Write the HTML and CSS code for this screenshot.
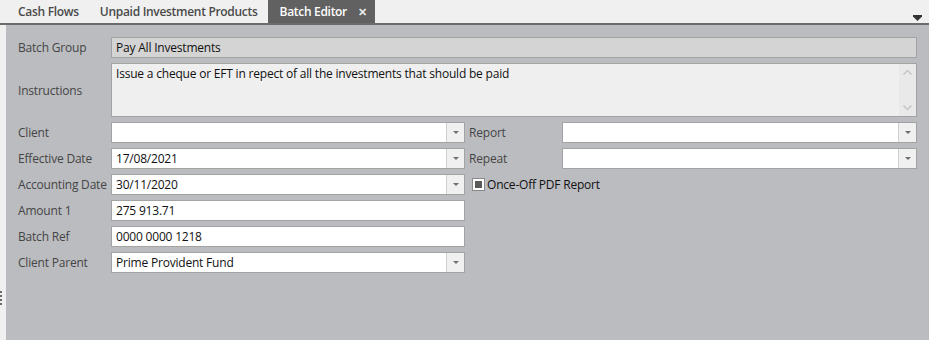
FILE: index.html
```html
<!DOCTYPE html>
<html lang="en">
<head>
  <meta charset="UTF-8">
  <title>Batch Editor</title>
  <link rel="stylesheet" href="styles.css">
</head>
<body>

  <!-- Tab strip -->
  <div class="tabs">
    <div class="tab">Cash Flows</div>
    <div class="tab">Unpaid Investment Products</div>
    <div class="tab active">Batch Editor <span class="close">&#x2715;</span></div>
    <div class="tab-menu">
      <svg width="9" height="6" viewBox="0 0 9 6"><path d="M0 0h9v1.5l-4.5 4.5-4.5-4.5z" fill="#333"/></svg>
    </div>
  </div>

  <div class="main">
    <div class="side">
      <div class="grip"></div>
    </div>

    <div class="panel">
      <div class="form">
        <label>Batch Group</label>
        <div class="field readonly wide">Pay All Investments</div>

        <label>Instructions</label>
        <div class="field memo wide">
          <span class="memo-text">Issue a cheque or EFT in repect of all the investments that should be paid</span>
          <div class="scroll">
            <svg width="9" height="6" viewBox="0 0 9 6"><path d="M0.5 5.5l4-4 4 4" fill="none" stroke="#c4c4c4" stroke-width="1.4"/></svg>
            <svg width="9" height="6" viewBox="0 0 9 6"><path d="M0.5 0.5l4 4 4-4" fill="none" stroke="#c4c4c4" stroke-width="1.4"/></svg>
          </div>
        </div>

        <label>Client</label>
        <div class="field combo"><span class="val"></span><span class="btn"><i></i></span></div>
        <label class="right">Report</label>
        <div class="field combo"><span class="val"></span><span class="btn"><i></i></span></div>

        <label>Effective Date</label>
        <div class="field combo"><span class="val">17/08/2021</span><span class="btn"><i></i></span></div>
        <label class="right">Repeat</label>
        <div class="field combo"><span class="val"></span><span class="btn"><i></i></span></div>

        <label>Accounting Date</label>
        <div class="field combo"><span class="val">30/11/2020</span><span class="btn"><i></i></span></div>
        <div class="check-cell"><span class="check"></span>Once-Off PDF Report</div>

        <label>Amount 1</label>
        <div class="field">275 913.71</div>
        <div class="blank"></div>

        <label>Batch Ref</label>
        <div class="field">0000 0000 1218</div>
        <div class="blank"></div>

        <label>Client Parent</label>
        <div class="field combo"><span class="val">Prime Provident Fund</span><span class="btn"><i></i></span></div>
        <div class="blank"></div>
      </div>
    </div>
  </div>

</body>
</html>
```

FILE: styles.css
```css
body {
  margin: 0;
  padding: 0;
  width: 929px;
  height: 340px;
  overflow: hidden;
  font-family: 'Open Sans', 'Noto Sans', sans-serif;
  font-size: 12px;
  background: #f0f0f0;
}

.tabs {
  display: flex;
  height: 23px;
  background: #f0f0f0;
  border-bottom: 2px solid #6b6b6b;
  padding-left: 7px;
}

.tab {
  display: flex;
  align-items: center;
  padding: 0 10px 0 11px;
  font-weight: 600;
  color: #4a4a4a;
  letter-spacing: -0.3px;
}

.tab.active {
  background: #616161;
  color: #fff;
  padding: 0 8px 0 12px;
}

.tab .close {
  margin-left: 11px;
  font-size: 11px;
  color: #e8e8e8;
  font-weight: 700;
}

.tab-menu {
  margin-left: auto;
  padding: 8px 7px 0 0;
}

.main {
  display: flex;
  height: 315px;
}

.side {
  width: 6px;
  background: #f0f0f0;
  position: relative;
}

.grip {
  position: absolute;
  left: 0;
  top: 266px;
  width: 2px;
  height: 14px;
  background: repeating-linear-gradient(#6a6a6a 0 2px, transparent 2px 4px);
}

.panel {
  flex: 1;
  background: #bbbcc0;
  padding: 12px 12px 0 12px;
}

.form {
  display: grid;
  grid-template-columns: 93px 354px 97px 1fr;
  grid-auto-rows: 21px;
  grid-template-rows: 21px 54px;
  row-gap: 5px;
}

.form label {
  display: flex;
  align-items: center;
  color: #454545;
  letter-spacing: -0.2px;
}

.form label.right {
  padding-left: 4px;
}

.blank {
  grid-column: 3 / 5;
}

.field {
  box-sizing: border-box;
  height: 21px;
  background: #fff;
  border: 1px solid #a3a3a3;
  display: flex;
  align-items: center;
  padding-left: 4px;
  color: #111;
  letter-spacing: -0.2px;
  white-space: nowrap;
}

.field.wide {
  grid-column: 2 / 5;
}

.field.readonly {
  background: #d4d4d4;
}

.field.memo {
  height: 54px;
  background: #efefef;
  align-items: flex-start;
  padding: 0 0 0 4px;
}

.memo-text {
  flex: 1;
  padding-top: 1px;
}

.scroll {
  width: 17px;
  height: 100%;
  background: #e9e9e9;
  display: flex;
  flex-direction: column;
  justify-content: space-between;
  align-items: center;
  padding: 5px 0;
  box-sizing: border-box;
}

.field.combo {
  padding-right: 0;
}

.combo .val {
  flex: 1;
}

.combo .btn {
  width: 17px;
  height: 100%;
  background: #f0f0f0;
  border-left: 1px solid #d0d0d0;
  display: flex;
  align-items: center;
  justify-content: center;
}

.combo .btn i {
  width: 0;
  height: 0;
  border-left: 3px solid transparent;
  border-right: 3px solid transparent;
  border-top: 3px solid #6e6e6e;
}

.check-cell {
  grid-column: 3 / 5;
  display: flex;
  align-items: center;
  padding-left: 7px;
  color: #111;
  letter-spacing: -0.2px;
  white-space: nowrap;
}

.check {
  flex: none;
  box-sizing: border-box;
  width: 11px;
  height: 11px;
  background: #5a5a5a;
  border: 2px solid #fff;
  outline: 1px solid #8a8a8a;
  margin: 0 3px 0 1px;
}
```
